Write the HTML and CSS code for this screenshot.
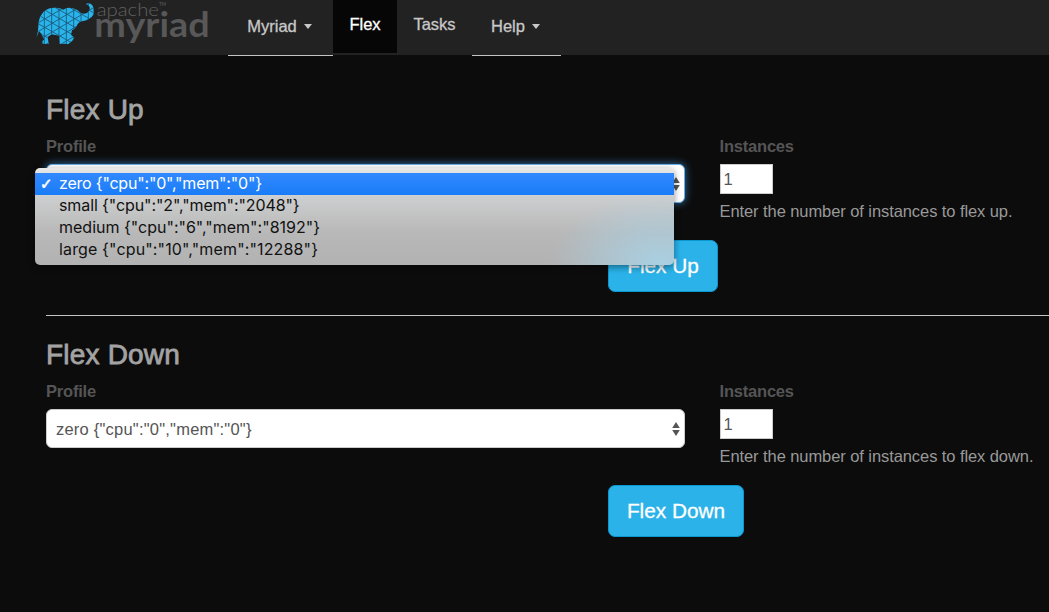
FILE: index.html
```html
<!DOCTYPE html>
<html lang="en">
<head>
<meta charset="utf-8">
<title>Apache Myriad</title>
<link rel="stylesheet" href="styles.css">
</head>
<body>
<header class="navbar">
  <svg class="logo" viewBox="0 0 570 165" role="img" aria-label="Apache Myriad">
    <defs>
      <clipPath id="body">
        <path id="elephant" d="M20 112L24 92L26 66Q29 48 40 36Q54 22 76 23Q92 23 100 29Q110 22 122 24Q140 25 149 37Q160 45 172 38Q181 32 179 22Q176 13 167 12Q179 6 187 16Q193 25 190 44Q181 60 155 64Q144 67 140 78Q134 87 126 91L123 104L133 113Q128 124 114 133L105 131L89 132L88 107L65 103L53 111L56 132L38 132L37 123L43 119L34 101L27 94Z"/>
      </clipPath>
    </defs>
    <use href="#elephant" class="logo-fill"/>
    <path class="logo-mesh" clip-path="url(#body)" d="M43 0V150M65 0V150M87 0V150M109 0V150M131 0V150M153 0V150M175 0V150M0 5L220 131M0 31L220 157M0 57L200 171M0 83L150 169M0 109L100 166M22 -8L220 105M66 -8L220 80M110 -8L220 55M0 31L66 -8M0 57L110 -8M0 83L154 -8M0 109L198 -8M0 135L220 6M0 161L220 32M44 161L220 58M88 161L220 84"/>
    <text class="logo-small" x="200" y="47" textLength="187" lengthAdjust="spacingAndGlyphs">apache</text>
    <text class="logo-tm" x="387" y="19" textLength="21" lengthAdjust="spacingAndGlyphs">TM</text>
    <text class="logo-big" x="193" y="111" textLength="346" lengthAdjust="spacingAndGlyphs">myriad</text>
  </svg>
  <nav class="nav">
    <a class="nav-item nav-menu nav-myriad">Myriad<span class="caret"></span></a>
    <a class="nav-item nav-flex">Flex</a>
    <a class="nav-item nav-tasks">Tasks</a>
    <a class="nav-item nav-menu nav-help">Help<span class="caret"></span></a>
  </nav>
</header>
<main class="content">
  <section class="panel">
    <h2 class="title title-up">Flex Up</h2>
    <div class="fields">
      <div class="profile">
        <div class="label label-profile"><span>Profile</span></div>
        <div class="select select-open">
          <svg class="arrows" viewBox="0 0 8 16"><path d="M4 1L7.8 7H.2zM4 15L7.8 9H.2z"/></svg>
          <div class="menu">
            <div class="option selected"><span class="check">✓</span><span class="o1">zero {"cpu":"0","mem":"0"}</span></div>
            <div class="option"><span class="o2">small {"cpu":"2","mem":"2048"}</span></div>
            <div class="option"><span class="o3">medium {"cpu":"6","mem":"8192"}</span></div>
            <div class="option"><span class="o4">large {"cpu":"10","mem":"12288"}</span></div>
          </div>
        </div>
      </div>
      <div class="instances">
        <div class="label label-instances"><span>Instances</span></div>
        <div class="number">1</div>
        <div class="help"><span>Enter the number of instances to flex up.</span></div>
      </div>
    </div>
    <div class="button button-up"><span>Flex Up</span></div>
  </section>
  <section class="panel panel-down">
    <h2 class="title title-down">Flex Down</h2>
    <div class="fields">
      <div class="profile">
        <div class="label label-profile"><span>Profile</span></div>
        <div class="select"><span class="value">zero {"cpu":"0","mem":"0"}</span>
          <svg class="arrows" viewBox="0 0 8 16"><path d="M4 1L7.8 7H.2zM4 15L7.8 9H.2z"/></svg>
        </div>
      </div>
      <div class="instances">
        <div class="label label-instances"><span>Instances</span></div>
        <div class="number">1</div>
        <div class="help"><span>Enter the number of instances to flex down.</span></div>
      </div>
    </div>
    <div class="button button-down"><span>Flex Down</span></div>
  </section>
</main>
</body>
</html>
```
FILE: styles.css
```css
* { box-sizing: border-box; }
body {
  margin: 0;
  height: 612px;
  overflow: hidden;
  background: #0c0c0c;
  font: 16.5px/24px "Liberation Sans", Arial, sans-serif;
  color: #999;
}
.navbar {
  display: flex;
  height: 55px;
  padding-left: 30px;
  background: #222;
}
.logo { width: 190px; height: 55px; flex: none; overflow: visible; }
.logo-fill { fill: #29b4ec; }
.logo-mesh { fill: none; stroke: #1c5876; stroke-width: 2.6; }
.logo-small { font: 300 53px Lato, sans-serif; fill: #606060; }
.logo-tm { font: 400 14px Lato, sans-serif; fill: #606060; }
.logo-big { font: 700 101px Lato, sans-serif; fill: #585858; }
.nav { display: flex; height: 55px; margin-left: 8px; }
.nav-item {
  display: flex;
  align-items: center;
  justify-content: center;
  height: 53px;
  padding-bottom: 5px;
  color: #c8c8c8;
  -webkit-text-stroke: .3px;
}
.nav-menu { height: 55.5px; padding-bottom: 3px; border-bottom: 1px solid #c4c4c4; }
.nav-myriad { width: 105px; padding-right: 2px; }
.nav-flex { width: 64px; background: #060606; color: #fff; }
.nav-tasks { width: 75px; }
.nav-help { width: 89px; padding-right: 2px; }
.caret {
  margin-left: 7px;
  margin-top: 2px;
  border: 4.5px solid transparent;
  border-top: 5px solid #c8c8c8;
  border-bottom: 0;
}
.content { padding: 37px 0 0 46px; }
.panel { height: 224px; border-bottom: 1px solid #c4c4c4; }
.panel-down { padding-top: 21px; height: 290px; border: 0; }
.title {
  margin: 0;
  height: 43px;
  font-size: 28px;
  line-height: 35px;
  font-weight: 400;
  letter-spacing: .2px;
  color: #a3a3a3;
  -webkit-text-stroke: .8px;
}
.fields { display: flex; height: 105px; }
.profile { width: 639px; margin-right: 34.5px; }
.instances { flex: 1; white-space: nowrap; }
.label { height: 29px; line-height: 23px; font-weight: 700; letter-spacing: -.2px; color: #555; }
.select {
  display: flex;
  position: relative;
  align-items: center;
  justify-content: space-between;
  height: 39px;
  padding: 0 4px 0 9px;
  background: #fff;
  border: 1px solid #ccc;
  border-radius: 6px;
  color: #555;
}
.value { letter-spacing: .22px; }
.select-open {
  justify-content: flex-end;
  border-color: #66afe9;
  box-shadow: 0 0 9px rgba(70, 160, 235, .7);
}
.arrows { width: 8px; height: 16px; fill: #555; }
.menu {
  position: absolute;
  z-index: 2;
  left: -12px;
  top: 3px;
  width: 639px;
  height: 97px;
  padding-top: 5px;
  border-radius: 5px;
  background:
    radial-gradient(ellipse 110px 75px at 625px 98px, #a9d1e4 0, rgba(169, 209, 228, 0) 100%),
    linear-gradient(#e8e8e8 0, #dcdddd 8px, #cccdce 30px, #b8b8b8 65px, #b2b2b2);
  box-shadow: 0 2px 7px rgba(0, 0, 0, .45);
  font-family: Inter, sans-serif;
  font-size: 16px;
  color: #111;
  overflow: hidden;
}
.option { height: 22px; line-height: 20px; padding-left: 24px; white-space: nowrap; }
.o1 { letter-spacing: -.2px; }
.o2 { letter-spacing: -.1px; }
.o4 { letter-spacing: .14px; }
.selected { position: relative; background: linear-gradient(#3389ff, #197cf7); color: #fff; }
.check { position: absolute; left: 5px; font: 700 15px/22px "DejaVu Sans", sans-serif; -webkit-text-stroke: .6px; }
.number {
  width: 53px;
  height: 30px;
  padding-left: 3px;
  line-height: 28px;
  background: #fff;
  border: 1px solid #ccc;
  color: #555;
}
.help { padding-top: 5px; letter-spacing: -.08px; }
.button {
  display: flex;
  align-items: center;
  justify-content: center;
  height: 52px;
  margin-left: 562px;
  background: #2bb2e9;
  border: 1px solid #0b97cf;
  border-radius: 7px;
  color: #fff;
  font-size: 20.8px;
  -webkit-text-stroke: .3px;
}
.button-up { width: 110px; }
.button-down { width: 136px; }
```
